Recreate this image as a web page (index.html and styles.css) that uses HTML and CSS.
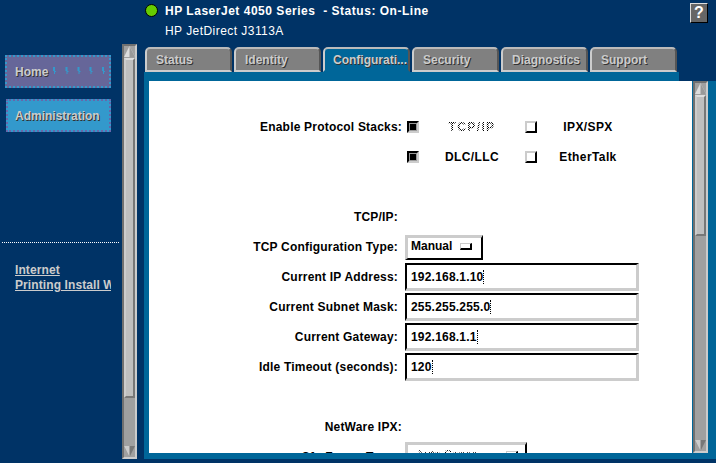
FILE: index.html
```html
<!DOCTYPE html>
<html lang="en">
<head>
<meta charset="utf-8">
<title>HP LaserJet 4050 Series</title>
<link rel="stylesheet" href="styles.css">
</head>
<body>
<div class="app">
  <header class="top">
    <span class="led"></span>
    <div class="titles">
      <div class="title">HP LaserJet 4050 Series&nbsp; - Status: On-Line</div>
      <div class="subtitle">HP JetDirect J3113A</div>
    </div>
    <div class="help">?</div>
  </header>
  <div class="body">
    <nav class="side">
      <a class="navbtn home">Home
        <svg class="ticks" width="60" height="10" viewBox="0 0 60 10"><g fill="#3399cc"><path d="M2 1h2v4h1v1h-1v2h-1v-3h-1z"/><path d="M14.500 1h2v4h1v1h-1v2h-1v-3h-1z"/><path d="M26.500 1h2v4h1v1h-1v2h-1v-3h-1z"/><path d="M38.500 1h2v4h1v1h-1v2h-1v-3h-1z"/><path d="M51 1h2v4h1v1h-1v2h-1v-3h-1z"/></g></svg>
      </a>
      <a class="navbtn admin">Administration</a>
      <div class="sep"></div>
      <div class="links"><a class="link">Internet</a><a class="link">Printing Install Wizard</a></div>
    </nav>
    <div class="vbar vbar-side">
      <svg class="arrow" width="11" height="11" viewBox="0 0 11 11"><path d="M5.500 0L11 11H0z" fill="#ddd"/><path d="M5.500 0L11 11H5.500z" fill="#999"/></svg>
      <div class="thumb thumb-side"></div>
      <div class="trough"></div>
      <svg class="arrow" width="11" height="11" viewBox="0 0 11 11"><path d="M0 0H11L5.500 11z" fill="#777"/><path d="M0 0H5.500V11z" fill="#ccc"/></svg>
    </div>
    <main class="main">
      <div class="tabs">
        <div class="tab">Status</div>
        <div class="tab">Identity</div>
        <div class="tab active">Configurati...</div>
        <div class="tab">Security</div>
        <div class="tab">Diagnostics</div>
        <div class="tab">Support</div>
      </div>
      <div class="band"></div>
      <div class="panel">
        <div class="sheet">
          <div class="row">
            <div class="label wide">Enable Protocol Stacks:</div>
            <div class="opts">
              <span class="check on"></span><span class="opt dither">TCP/IP</span>
              <span class="check"></span><span class="opt">IPX/SPX</span>
            </div>
          </div>
          <div class="row">
            <div class="label"></div>
            <div class="opts">
              <span class="check on"></span><span class="opt">DLC/LLC</span>
              <span class="check"></span><span class="opt">EtherTalk</span>
            </div>
          </div>
          <div class="row"></div>
          <div class="row"><div class="label">TCP/IP:</div></div>
          <div class="row">
            <div class="label">TCP Configuration Type:</div>
            <div class="select manual">Manual<span class="knob"></span></div>
          </div>
          <div class="row"><div class="label">Current IP Address:</div><div class="input">192.168.1.10<span class="caret"></span></div></div>
          <div class="row"><div class="label">Current Subnet Mask:</div><div class="input">255.255.255.0<span class="caret"></span></div></div>
          <div class="row"><div class="label">Current Gateway:</div><div class="input">192.168.1.1<span class="caret"></span></div></div>
          <div class="row"><div class="label">Idle Timeout (seconds):</div><div class="input">120<span class="caret"></span></div></div>
          <div class="row"></div>
          <div class="row"><div class="label wide">NetWare IPX:</div></div>
          <div class="row">
            <div class="label">Cfg Frame Type:</div>
            <div class="select frame"><span class="dither">Auto Sense</span><span class="knob"></span></div>
          </div>
        </div>
        <div class="vbar vbar-main">
          <svg class="arrow" width="11" height="11" viewBox="0 0 11 11"><path d="M5.500 0L11 11H0z" fill="#ddd"/><path d="M5.500 0L11 11H5.500z" fill="#999"/></svg>
          <div class="thumb thumb-main"></div>
          <div class="trough"></div>
          <svg class="arrow" width="11" height="11" viewBox="0 0 11 11"><path d="M0 0H11L5.500 11z" fill="#777"/><path d="M0 0H5.500V11z" fill="#ccc"/></svg>
        </div>
      </div>
    </main>
  </div>
</div>
</body>
</html>
```
FILE: styles.css
```css
* { box-sizing: border-box; }
html, body { margin: 0; padding: 0; background: #003366; }
body { font-family: "Liberation Sans", Arial, sans-serif; font-size: 12px; }
.app { width: 716px; height: 463px; overflow: hidden; background: #003366; display: flex; flex-direction: column; }

/* header */
.top { height: 44px; flex: none; display: flex; align-items: flex-start; color: #fff; padding: 3px 8px 0 145px; }
.led { width: 13px; height: 13px; border-radius: 50%; background: #66cc00; border: 1px solid #000; flex: none; margin-top: 1px; }
.titles { margin-left: 7px; flex: 1; }
.title { font-weight: 700; line-height: 14px; margin-top: 1px; letter-spacing: .52px; white-space: nowrap; }
.subtitle { line-height: 14px; margin-top: 6px; letter-spacing: .45px; white-space: nowrap; }
.help { width: 18px; height: 20px; background: #666; border: 1px solid; border-color: #ddd #000 #000 #ddd; color: #fff; font-weight: 700; font-size: 16px; line-height: 18px; text-align: center; }

/* body */
.body { flex: none; height: 415px; display: flex; }
.side { width: 122px; flex: none; padding-top: 11px; }
.navbtn { display: flex; align-items: center; height: 33px; font-weight: 700; color: #ccc; text-shadow: 1px 1px 0 #333; border: 2px dotted #3399cc; white-space: nowrap; position: relative; }
.home { margin-left: 5px; width: 106px; background: #666699; padding-left: 8px; }
.admin { margin-left: 6px; width: 105px; margin-top: 11px; background: #3399cc; border-color: #6666aa; padding-left: 7px; }
.ticks { position: absolute; left: 44px; top: 9px; }
.sep { margin: 110px 3px 0 2px; border-top: 1px dotted #fff; }
.links { margin: 20px 0 0 15px; width: 96px; overflow: hidden; display: flex; flex-direction: column; gap: 1px; }
.link { color: #ccc; font-weight: 700; line-height: 14px; text-decoration: underline; white-space: nowrap; letter-spacing: .1px; }

/* scrollbars */
.vbar { width: 15px; flex: none; display: flex; flex-direction: column; background: #a0a0a0; border-left: 2px solid #707070; border-right: 2px solid #ccc; border-top: 2px solid #707070; border-bottom: 2px solid #ccc; }
.arrow { display: block; flex: none; }
.thumb { flex: none; background: #bfbfbf; border: 2px solid; border-color: #ddd #777 #777 #ccc; margin-top: 1px; width: 11px; }
.thumb-side { height: 340px; }
.thumb-main { height: 141px; }
.trough { flex: 1; }
.vbar-main { margin-left: 1px; height: 372px; }

/* tabs */
.main { width: 572px; margin-left: 7px; flex: none; display: flex; flex-direction: column; }
.tabs { display: flex; gap: 2px; padding: 3px 0 0 1px; height: 28px; flex: none; }
.tab { width: 87px; height: 25px; background: #808080; border: 2px solid; border-color: #bbb #555 #ccc #ccc; border-radius: 5px 5px 0 0; color: #ccc; font-weight: 700; text-shadow: 1px 1px 0 #333; line-height: 22px; padding-left: 9px; white-space: nowrap; }
.tab.active { background: #006699; border-bottom-color: #006699; padding-left: 8px; }
.band { width: 535px; height: 9px; flex: none; background: #006699; }
.panel { flex: 1; min-height: 0; display: flex; background: #006699; padding: 0 8px 6px 5px; }
.sheet { flex: 1; min-width: 0; background: #fff; padding-top: 31px; overflow: hidden; color: #000; font-weight: 700; }

/* form */
.row { height: 30px; display: flex; align-items: center; }
.label { width: 249px; flex: none; text-align: right; white-space: nowrap; letter-spacing: .2px; }
.label.wide { width: 253px; }
.opts { display: grid; grid-template-columns: 12px 106px 12px 102px; align-items: center; margin-left: 9px; }
.row:first-child .opts { margin-left: 5px; }
.opt { text-align: center; letter-spacing: .4px; }
.dither { background: repeating-conic-gradient(#000 0 25%, #fff 0 50%) 0 0 / 2px 2px; -webkit-background-clip: text; background-clip: text; color: transparent; }
.opt.dither { letter-spacing: 1.4px; justify-self: center; }
.check { width: 12px; height: 12px; border: 2px solid; border-color: #ccc #000 #000 #ccc; display: block; }
.check.on { border-color: #000 #ccc #ccc #000; background: #000; box-shadow: inset 0 0 0 1px #999; }
.select { margin-left: 7px; height: 25px; border: solid; border-color: #ccc #000 #000 #ccc; border-width: 3px 2px 2px 3px; display: flex; align-items: center; padding: 0 0 3px 3px; flex: none; }
.manual { width: 78px; }
.frame { width: 122px; height: 30px; align-self: flex-start; font-weight: 400; align-items: flex-start; padding: 3px 0 0 8px; }
.knob { width: 12px; height: 7px; border: solid; border-color: #ccc #000 #000 #ccc; border-width: 1px 2px 2px 1px; margin-left: 8px; }
.frame .knob { margin: 3px 7px 0 auto; }
.input { margin-left: 7px; width: 234px; height: 28px; flex: none; border: solid; border-color: #000 #ccc #ccc #000; border-width: 2px 3px 3px 2px; padding-left: 4px; display: flex; align-items: center; letter-spacing: .2px; }
.caret { width: 1px; height: 14px; border-left: 1px dotted #000; }
```
